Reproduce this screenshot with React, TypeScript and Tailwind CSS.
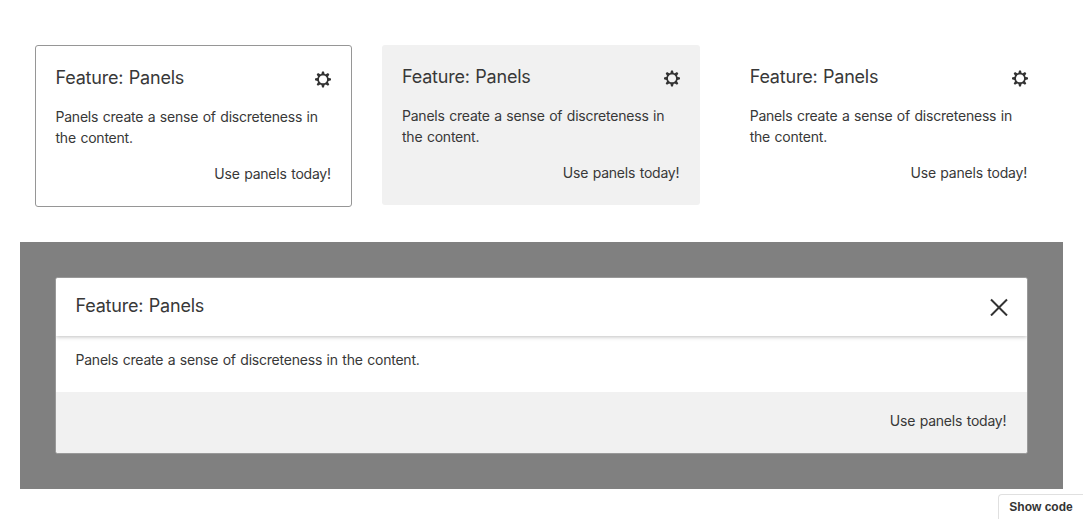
import React from "react";

function Gear({ className = "" }: { className?: string }) {
  const angles = [0, 45, 90, 135, 180, 225, 270, 315];
  return (
    <svg viewBox="0 -0.4 18 18" className={"block h-[18px] w-[18px] shrink-0 " + className} fill="#333">
      <circle cx="9" cy="9" r="4.85" fill="none" stroke="#333" strokeWidth="1.6" />
      {angles.map((a) => (
        <path key={a} d="M8.1 1h1.8l1.1 3.9H7z" transform={`rotate(${a} 9 9)`} />
      ))}
    </svg>
  );
}

const titleText = "text-[18px] leading-6 tracking-[-0.2px] [word-spacing:0.6px]";
const bodyText = "text-[14px] leading-[21px] tracking-[-0.22px] [word-spacing:0.8px]";

function Panel({ className, gearClass }: { className: string; gearClass: string }) {
  return (
    <section className={"rounded-[3px] " + className}>
      <div className="flex h-6 items-start justify-between">
        <h2 className={titleText}>Feature: Panels</h2>
        <Gear className={gearClass} />
      </div>
      <p className={"mt-4 " + bodyText}>
        Panels create a sense of discreteness in
        <br />
        the content.
      </p>
      <p className={"mt-[15px] pr-[0.7px] text-right " + bodyText}>Use panels today!</p>
    </section>
  );
}

export default function App() {
  return (
    <div className="flex h-[519px] w-[1083px] flex-col bg-white px-5 pt-[45px] font-['Inter',sans-serif] text-[#383838]">
      <div className="flex h-[197px] items-start px-[15px]">
        <Panel className="h-[162px] w-[317px] border border-[#969696] px-[19.5px] pt-5" gearClass="mt-1" />
        <Panel className="ml-[30px] h-[160px] w-[318px] bg-[#f1f1f1] px-5 pt-5" gearClass="mt-1 -mr-px" />
        <Panel className="ml-[29.7px] h-[160px] w-[318px] px-5 pt-5" gearClass="mt-1 -mr-px" />
      </div>
      <div className="h-[247px] shrink-0 bg-[#808080] px-[35px] pt-[35px]">
        <section className="flex h-[177px] flex-col overflow-hidden rounded-[3px] border border-[#999] bg-white">
          <header className="z-10 flex h-[58px] items-start justify-between bg-white px-[19.5px] pt-4 shadow-[0_1px_4px_rgba(0,0,0,0.25)]">
            <h2 className={titleText}>Feature: Panels</h2>
            <svg viewBox="0 0 18 18" className="mt-1 h-[18px] w-[18px]" stroke="#333" strokeWidth="2" fill="none">
              <path d="M1 1.5l16 16M17 1.5L1 17.5" />
            </svg>
          </header>
          <p className={"h-14 px-[19.5px] pt-[13px] " + bodyText}>Panels create a sense of discreteness in the content.</p>
          <p className={"flex-1 bg-[#f1f1f1] px-[20.7px] pt-[18px] text-right " + bodyText}>Use panels today!</p>
        </section>
      </div>
      <div className="-mr-5 mt-[5px] flex h-[25px] justify-end">
        <button className="w-[85px] rounded-tl border-l border-t border-[#e0e0e0] text-center font-['Liberation_Sans',sans-serif] text-[12px] font-bold leading-[24px] text-[#333]">
          Show code
        </button>
      </div>
    </div>
  );
}
